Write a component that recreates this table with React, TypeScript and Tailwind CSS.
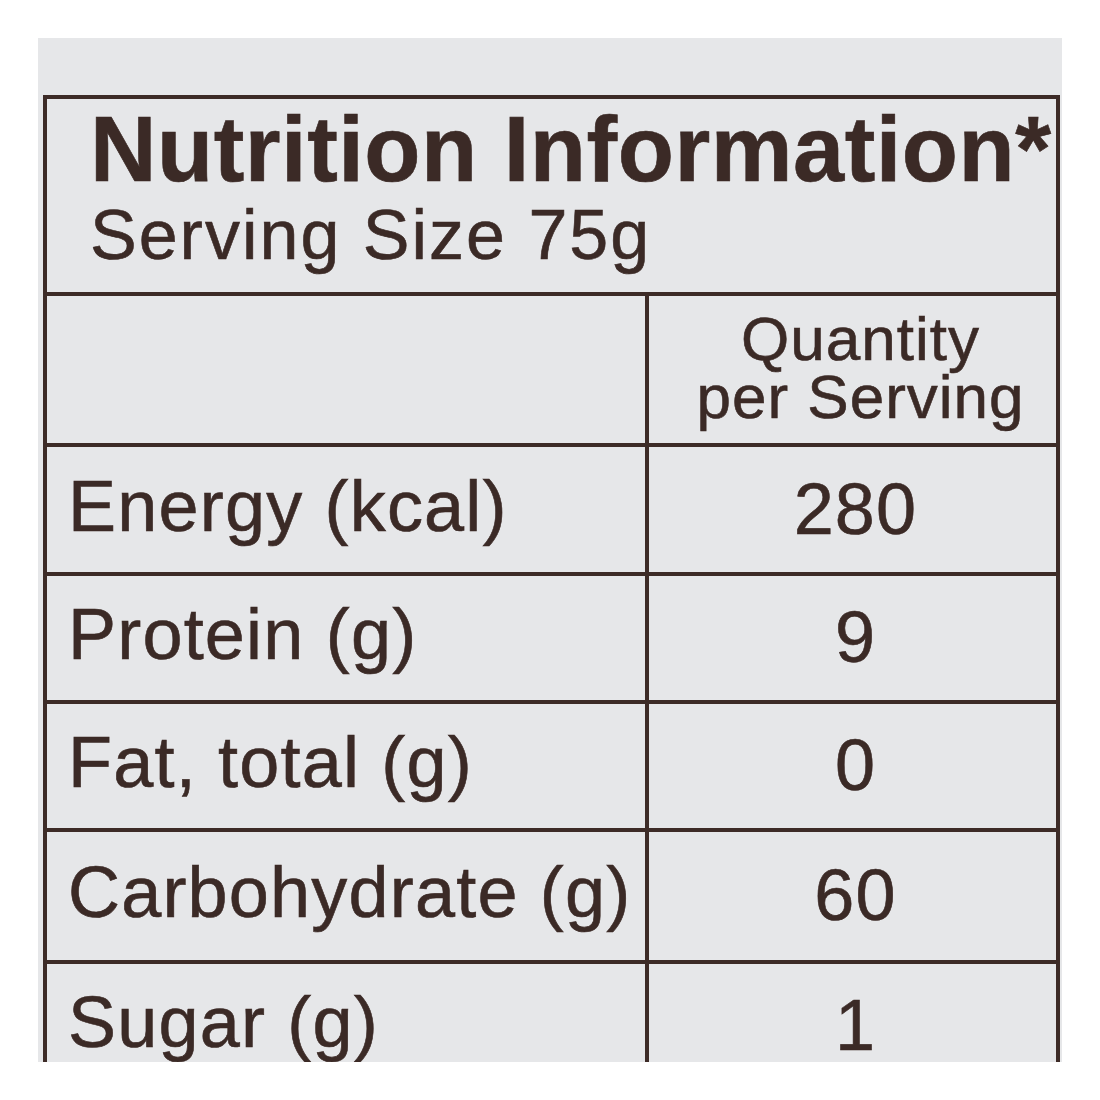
const rows = [
  { label: "Energy (kcal)", value: "280", h: "h-[129px]" },
  { label: "Protein (g)", value: "9", h: "h-[128px]" },
  { label: "Fat, total (g)", value: "0", h: "h-[128px]" },
  { label: "Carbohydrate (g)", value: "60", h: "h-[132px]" },
  { label: "Sugar (g)", value: "1", h: "h-[128px]" },
];

export default function App() {
  return (
    <div className="w-[1100px] h-[1100px] bg-white p-[38px] font-['Liberation_Sans',Arial,sans-serif] text-[#3b2a26] [-webkit-text-stroke:0.6px_#3b2a26]">
      <div className="w-[1024px] h-[1024px] bg-[#e6e7e9] overflow-hidden pt-[57px] pl-[5px]">
        <div className="w-[1017px] border-[4px] border-b-0 border-[#3d2b27]">
          <div className="pl-[43px] pt-[4px] pb-[22px]">
            <h1 className="text-[92px] leading-[92px] font-bold tracking-[0.5px]">
              Nutrition Information*
            </h1>
            <p className="mt-[5px] text-[70px] leading-[70px] tracking-[2px]">
              Serving Size 75g
            </p>
          </div>

          <div className="flex h-[151px] border-t-[4px] border-[#3d2b27]">
            <div className="w-[598px]" />
            <div className="flex-1 border-l-[4px] border-[#3d2b27] flex flex-col items-center justify-center pl-[16px] pb-[4px] text-[62px] leading-[58px] tracking-[1px]">
              <span>Quantity</span>
              <span>per Serving</span>
            </div>
          </div>

          {rows.map((r) => (
            <div
              key={r.label}
              className={`flex border-t-[4px] border-[#3d2b27] text-[72px] leading-none tracking-[1.2px] ${r.h}`}
            >
              <div className="w-[598px] flex items-center pl-[21px] pb-[8px]">
                {r.label}
              </div>
              <div className="flex-1 border-l-[4px] border-[#3d2b27] flex items-center justify-center pl-[6px] pb-[2px]">
                {r.value}
              </div>
            </div>
          ))}
        </div>
      </div>
    </div>
  );
}
